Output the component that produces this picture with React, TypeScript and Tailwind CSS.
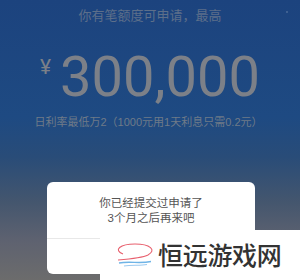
export default function App() {
  return (
    <div
      className="relative w-[300px] h-[280px] overflow-hidden bg-[linear-gradient(180deg,#1c437e_0%,#1e4a82_42%,#294c78_56%,#44566e_72%,#5e6270_86%,#6c6c6c_100%)]"
      style={{ fontFamily: '"Liberation Sans", "Noto Sans CJK SC", sans-serif' }}
    >
      <div className="flex flex-col items-center">
        <div className="mt-[7px] text-[13px] leading-[17px] text-[#5d6f8a]">你有笔额度可申请，最高</div>
        <div className="mt-[25px] flex items-start">
          <span className="mt-[8px] mr-[9px] text-[21px] leading-[21px] text-[#7c8088]" style={{ fontFamily: 'Roboto, sans-serif' }}>¥</span>
          <span className="text-[56px] leading-[56px] text-[#7c8088]" style={{ fontFamily: 'Roboto, sans-serif' }}>300,000</span>
        </div>
        <div className="mt-[10px] ml-[-3px] text-[11px] leading-[14px] text-[#6f7a88]">日利率最低万2（1000元用1天利息只需0.2元）</div>
      </div>
      <div className="absolute left-[47px] top-[182px] w-[208px] h-[92px] rounded-[6px] bg-white flex flex-col">
        <div className="pt-[14px] h-[56px] text-center text-[11.5px] leading-[15px] text-[#555]">
          <div>你已经提交过申请了</div>
          <div>3个月之后再来吧</div>
        </div>
        <div className="h-px bg-[#e8e8e8]" />
      </div>
      <div className="absolute left-[100px] top-[230px] w-[200px] h-[50px] bg-white">
        <svg width="200" height="50" viewBox="100 230 200 50" className="absolute left-0 top-0">
          <path d="M123 254 C113 250 120 244 135 244 C150 244 157 250 148 255 C142 258 130 259 118 260" fill="none" stroke="#e8606e" strokeWidth="1.1" />
          <path d="M119 263 C130 261 140 264 151 261.5" fill="none" stroke="#6fb4e6" strokeWidth="1.4" />
          <path d="M124 266 C132 264.5 140 266 147 264.5" fill="none" stroke="#9ccaf0" strokeWidth="1.1" />
        </svg>
        <span className="absolute left-[58px] top-[9px] text-[25px] leading-[30px] font-medium text-[#333] tracking-[-0.3px]" style={{ fontFamily: '"Noto Sans CJK SC", sans-serif' }}>恒远游戏网</span>
      </div>
      <div className="absolute left-[286px] top-[11px] w-[2px] h-[2px] rounded-full bg-[#4a6a98]" />
    </div>
  );
}
